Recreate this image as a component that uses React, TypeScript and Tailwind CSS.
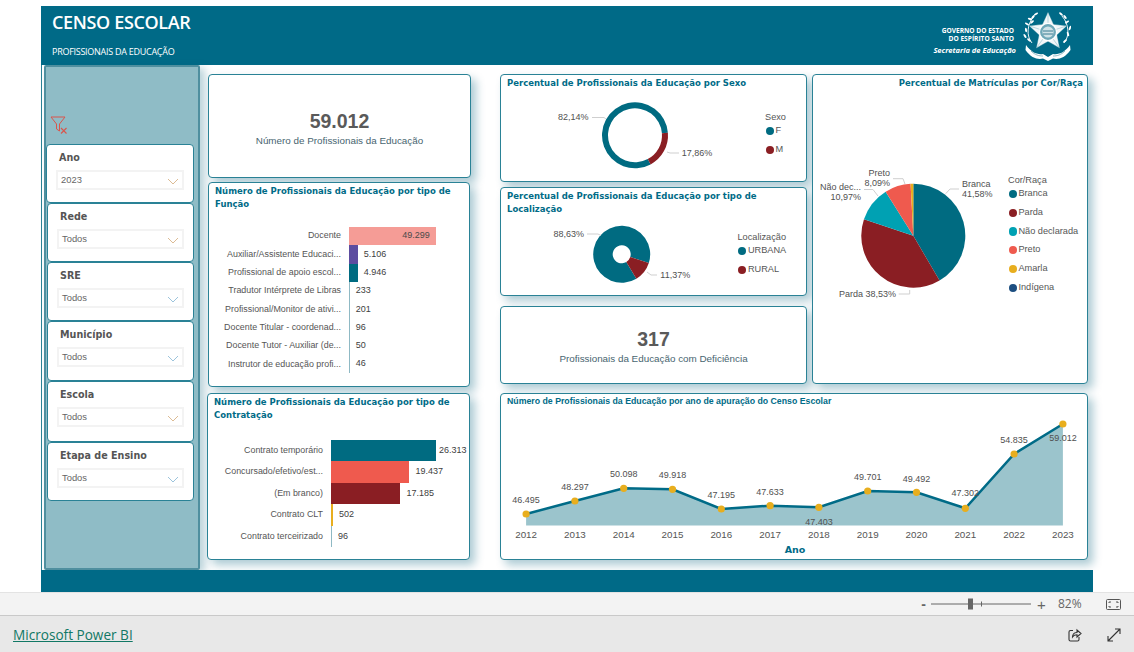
import React from "react";

const TEAL = "#006b87";
const RED = "#8a1e23";

function Card({ className = "", children }: { className?: string; children?: React.ReactNode }) {
  return (
    <div className={"bg-white border border-[#2a8296] rounded-[4px] shadow-[5px_5px_10px_rgba(0,95,120,0.33)] overflow-hidden shrink-0 " + className}>
      {children}
    </div>
  );
}

function Title({ children, className = "" }: { children: React.ReactNode; className?: string }) {
  return (
    <div className={"font-['DejaVu_Sans'] font-bold text-[8.5px] leading-[13px] text-[#006b87] pt-[2px] whitespace-nowrap " + className}>{children}</div>
  );
}

function Kpi({ value, label, className = "" }: { value: string; label: string; className?: string }) {
  return (
    <div className={"h-full flex flex-col items-center justify-center " + className}>
      <div className="font-['Liberation_Sans'] font-bold text-[19.5px] leading-[22px] text-[#5a5a5a]">{value}</div>
      <div className="font-['Liberation_Sans'] text-[9.85px] leading-[14px] mt-[2px] text-[#47646f]">{label}</div>
    </div>
  );
}

function Slicer({ title, value, chev, className = "" }: { title: string; value: string; chev: string; className?: string }) {
  return (
    <div className={"bg-white border border-[#2a8296] rounded-[4px] shrink-0 px-[9px] " + className}>
      <div className="h-[25px] pt-[6px] pl-[3px] font-['DejaVu_Sans'] font-bold text-[9.6px] leading-[13px] text-[#555555]">{title}</div>
      <div className="h-[20px] border-2 border-[#f3f3f3] flex items-center justify-between pl-[3px] pr-[3px] font-['Liberation_Sans'] text-[9.4px] text-[#666666]">
        <span>{value}</span>
        <svg width="12" height="7" viewBox="0 0 12 7" className="mt-[2px]">
          <path d="M1 1 L6 6 L11 1" fill="none" stroke={chev} strokeWidth="1" />
        </svg>
      </div>
    </div>
  );
}

function Legend({ title, items, className = "" }: { title: string; items: [string, string][]; className?: string }) {
  return (
    <div className={"font-['Liberation_Sans'] text-[9.2px] text-[#555555] " + className}>
      <div className="h-[9px] leading-[9px]">{title}</div>
      {items.map(([t, c]) => (
        <div key={t} className="h-[18.8px] flex items-center">
          <span className="w-[8.4px] h-[8.4px] rounded-full mr-[1.5px] ml-[0.5px]" style={{ backgroundColor: c }} />
          <span>{t}</span>
        </div>
      ))}
    </div>
  );
}

function pt(cx: number, cy: number, r: number, deg: number): [number, number] {
  const a = ((deg - 90) * Math.PI) / 180;
  return [cx + r * Math.cos(a), cy + r * Math.sin(a)];
}

function arc(cx: number, cy: number, r: number, r0: number, a: number, b: number) {
  const [x1, y1] = pt(cx, cy, r, a);
  const [x2, y2] = pt(cx, cy, r, b);
  const large = b - a > 180 ? 1 : 0;
  if (r0 === 0) return `M${cx} ${cy} L${x1} ${y1} A${r} ${r} 0 ${large} 1 ${x2} ${y2} Z`;
  const [x3, y3] = pt(cx, cy, r0, b);
  const [x4, y4] = pt(cx, cy, r0, a);
  return `M${x1} ${y1} A${r} ${r} 0 ${large} 1 ${x2} ${y2} L${x3} ${y3} A${r0} ${r0} 0 ${large} 0 ${x4} ${y4} Z`;
}

function Txt({ x, y, children, anchor = "start", className = "fill-[#505050] text-[9px]" }: { x: number; y: number; children: React.ReactNode; anchor?: "start" | "middle" | "end"; className?: string }) {
  return (
    <text x={x} y={y} textAnchor={anchor} dominantBaseline="central" className={"font-['Liberation_Sans'] " + className}>
      {children}
    </text>
  );
}

function Leader({ d }: { d: string }) {
  return <path d={d} fill="none" stroke="#cfcfcf" strokeWidth="1" />;
}

type Row = { label: string; w: number; color: string; value: string; inside?: boolean; ml?: number };

function Bars({ rows, labelW, gap, h, className = "" }: { rows: Row[]; labelW: number; gap: number; h: number; className?: string }) {
  return (
    <div className={"font-['Liberation_Sans'] text-[8.9px] text-[#555555] " + className}>
      {rows.map((r) => (
        <div key={r.label} className="flex items-center" style={{ height: h }}>
          <div className="text-right whitespace-nowrap shrink-0" style={{ width: labelW, marginRight: gap }}>{r.label}</div>
          <div className="h-full shrink-0 flex items-center justify-end" style={{ width: r.w, backgroundColor: r.color }}>
            {r.inside && <span className="pr-[6px] text-[9px] text-[#4a4a4a]">{r.value}</span>}
          </div>
          {!r.inside && <span className="text-[9px] text-[#404040]" style={{ marginLeft: r.ml ?? 6 }}>{r.value}</span>}
        </div>
      ))}
    </div>
  );
}

const funcao: Row[] = [
  { label: "Docente", w: 87, color: "#f59c96", value: "49.299", inside: true },
  { label: "Auxiliar/Assistente Educaci...", w: 9, color: "#5d4da0", value: "5.106" },
  { label: "Profissional de apoio escol...", w: 9, color: "#006b81", value: "4.946" },
  { label: "Tradutor Intérprete de Libras", w: 1, color: "#8fb9c4", value: "233" },
  { label: "Profissional/Monitor de ativi...", w: 1, color: "#8fb9c4", value: "201" },
  { label: "Docente Titular - coordenad...", w: 1, color: "#8fb9c4", value: "96" },
  { label: "Docente Tutor - Auxiliar (de...", w: 1, color: "#8fb9c4", value: "50" },
  { label: "Instrutor de educação profi...", w: 1, color: "#8fb9c4", value: "46" },
];

const contrat: Row[] = [
  { label: "Contrato temporário", w: 105.5, color: "#006b81", value: "26.313", ml: 3 },
  { label: "Concursado/efetivo/est...", w: 78, color: "#ef5a4e", value: "19.437", ml: 7 },
  { label: "(Em branco)", w: 69, color: "#8a1e23", value: "17.185", ml: 7 },
  { label: "Contrato CLT", w: 2, color: "#e8ae1e", value: "502", ml: 6.5 },
  { label: "Contrato terceirizado", w: 1, color: "#8fb9c4", value: "96", ml: 6.5 },
];

const years = [2012, 2013, 2014, 2015, 2016, 2017, 2018, 2019, 2020, 2021, 2022, 2023];
const ys = [514, 501, 488.3, 489.3, 509, 505.7, 507.3, 491, 492.3, 508.3, 454, 424];
const vals = ["46.495", "48.297", "50.098", "49.918", "47.195", "47.633", "47.403", "49.701", "49.492", "47.302", "54.835", "59.012"];
const labelYs = [499.7, 486.7, 473.7, 474.7, 494.7, 491.7, 521.7, 476.7, 478.7, 493.3, 439.7, 437.7];
const xs = years.map((_, i) => 526.1 + i * 48.8);

function LineChart() {
  const line = xs.map((x, i) => `${x},${ys[i]}`).join(" ");
  return (
    <svg width="586" height="150" viewBox="501 409 586 150" className="block">
      <polygon points={`526.1,525.5 ${line} ${xs[11]},525.5`} fill="#9bc4cc" />
      <polyline points={line} fill="none" stroke={TEAL} strokeWidth="2.5" />
      {xs.map((x, i) => (
        <circle key={x} cx={x} cy={ys[i]} r="3.6" fill="#e8ae1e" />
      ))}
      {xs.map((x, i) => (
        <Txt key={x} x={x} y={labelYs[i]} anchor="middle">{vals[i]}</Txt>
      ))}
      {xs.map((x, i) => (
        <Txt key={x} x={x} y={534.7} anchor="middle" className="fill-[#555555] text-[9.8px]">{years[i]}</Txt>
      ))}
      <text x={795} y={549} textAnchor="middle" dominantBaseline="central" className="font-['DejaVu_Sans'] font-bold text-[9.5px] fill-[#006b87]">Ano</text>
    </svg>
  );
}

function Leaf({ x, y, a }: { x: number; y: number; a: number }) {
  return <ellipse cx={x} cy={y} rx="2.3" ry="1" fill="#ffffff" transform={`rotate(${a} ${x} ${y})`} />;
}

function Crest() {
  const star = Array.from({ length: 10 }, (_, i) => {
    const [x, y] = pt(25, 22, i % 2 === 0 ? 20 : 9.5, i * 36);
    return `${x},${y}`;
  }).join(" ");
  return (
    <svg width="48" height="52" viewBox="0 0 48 52" className="shrink-0">
      <path d="M9 33 C3 26 4 14 11 6" fill="none" stroke="#ffffff" strokeWidth="0.9" />
      <path d="M41 33 C47 26 46 14 39 6" fill="none" stroke="#ffffff" strokeWidth="0.9" />
      <Leaf x={10} y={7} a={-50} />
      <Leaf x={13} y={4} a={-30} />
      <Leaf x={7} y={9} a={20} />
      <Leaf x={9} y={12} a={-40} />
      <Leaf x={4} y={14} a={30} />
      <Leaf x={3} y={20} a={80} />
      <Leaf x={2} y={26} a={60} />
      <Leaf x={6} y={30} a={40} />
      <Leaf x={38} y={4} a={40} />
      <Leaf x={42} y={7} a={50} />
      <Leaf x={44} y={12} a={-30} />
      <Leaf x={47} y={18} a={-70} />
      <Leaf x={45} y={24} a={70} />
      <Leaf x={42} y={31} a={-40} />
      <polygon points={star} fill="#ffffff" fillOpacity="0.95" stroke="#0a6f87" strokeWidth="0.4" />
      {Array.from({ length: 5 }, (_, i) => {
        const [x, y] = pt(25, 22, 19, i * 72);
        return <path key={i} d={`M25 22 L${x} ${y}`} stroke="#9fc6d0" strokeWidth="0.7" />;
      })}
      <circle cx="25" cy="22" r="8.6" fill="#6fa8b8" stroke="#ffffff" strokeWidth="1.3" />
      <circle cx="25" cy="22" r="5.6" fill="#cfe2e7" />
      <path d="M20 21h10M20 24h10" stroke="#3b7d92" strokeWidth="1" />
      <path d="M3 35 C8 42 14 45 20 44 L25 47 L30 44 C36 45 42 42 47 35 L47.5 40 C42 48 35 50 30 48.5 L25 51 L20 48.5 C15 50 8 48 2.5 40 Z" fill="#ffffff" />
      <path d="M8 41 C12 45 16 46 20 46 M42 41 C38 45 34 46 30 46" fill="none" stroke="#4b8da0" strokeWidth="0.6" />
    </svg>
  );
}

export default function App() {
  const teal = "#006b81";
  return (
    <div className="w-[1134px] h-[652px] bg-white overflow-hidden flex flex-col">
      <div className="pt-[6px] pl-[41px] h-[586px] shrink-0 box-content">
        <div className="w-[1052px] h-[586px] flex flex-col">
          {/* header */}
          <header className="h-[59px] shrink-0 bg-[#006a87] flex justify-between text-white">
            <div className="pl-[11px] font-['Open_Sans']">
              <div className="text-[18px] leading-[24px] font-semibold tracking-[-0.35px] mt-[4px]">CENSO ESCOLAR</div>
              <div className="text-[9px] leading-[12px] mt-[12px] tracking-[-0.27px]">PROFISSIONAIS DA EDUCAÇÃO</div>
            </div>
            <div className="flex items-start pr-[22px] pt-[4px]">
              <div className="text-right font-['Open_Sans'] font-bold text-[6.6px] leading-[8px] mt-[17px] mr-[6px]">
                <div className="pr-[3px]">GOVERNO DO ESTADO</div>
                <div className="pr-[3px]">DO ESPÍRITO SANTO</div>
                <div className="italic mt-[3px] text-[7.5px] pr-[1px]">Secretaria de Educação</div>
              </div>
              <Crest />
            </div>
          </header>

          {/* body */}
          <div className="h-[505px] shrink-0 flex bg-white">
            <aside className="w-[159px] shrink-0 pl-[2px] border-l border-[#2a8296]">
              <div className="h-full bg-[#8fbcc6] border-2 border-[#4f8f9f] rounded-[2px] flex flex-col shadow-[5px_3px_9px_rgba(0,95,120,0.28)]">
                <svg width="18" height="18" viewBox="0 0 18 18" className="ml-[4px] mt-[49px] mb-[10px] shrink-0">
                  <path d="M1 1 H15 L9.5 8 V15 L6.5 13 V8 Z" fill="none" stroke="#d9554c" strokeWidth="1" />
                  <path d="M11 12 L16.5 17.5 M16.5 12 L11 17.5" stroke="#d9554c" strokeWidth="1.1" />
                </svg>
                <Slicer title="Ano" value="2023" chev="#dcbb94" className="h-[59px] w-[148px]" />
                <Slicer title="Rede" value="Todos" chev="#dcbb94" className="h-[59px] w-[147px] ml-[1px]" />
                <Slicer title="SRE" value="Todos" chev="#9cc4dc" className="h-[59px] w-[147px] ml-[1px]" />
                <Slicer title="Município" value="Todos" chev="#9cc4dc" className="h-[60px] w-[147px] ml-[1px]" />
                <Slicer title="Escola" value="Todos" chev="#dcbb94" className="h-[61px] w-[147px] ml-[1px]" />
                <Slicer title="Etapa de Ensino" value="Todos" chev="#9cc4dc" className="h-[59px] w-[147px] ml-[1px]" />
              </div>
            </aside>

            {/* col 1 */}
            <div className="w-[263px] ml-[8px] pt-[9px] shrink-0 flex flex-col">
              <Card className="h-[104px] w-[263px]">
                <Kpi value="59.012" label="Número de Profissionais da Educação" className="pt-[6px]" />
              </Card>
              <Card className="h-[205px] w-[262px] mt-[4px]">
                <Title className="px-[6px]">Número de Profissionais da Educação por tipo de<br />Função</Title>
                <Bars rows={funcao} labelW={132} gap={7.7} h={18.3} className="mt-[16px]" />
              </Card>
              <Card className="h-[167px] w-[263px] mt-[6px] -ml-[1px]">
                <Title className="px-[6px]">Número de Profissionais da Educação por tipo de<br />Contratação</Title>
                <Bars rows={contrat} labelW={115} gap={7.5} h={21.5} className="mt-[17.5px]" />
              </Card>
            </div>

            {/* right */}
            <div className="w-[588px] ml-[29px] pt-[9px] shrink-0 flex flex-col">
              <div className="h-[310px] flex gap-[5px] shrink-0">
                <div className="w-[307px] shrink-0 flex flex-col">
                  <Card className="h-[108px]">
                    <Title className="px-[6px]">Percentual de Profissionais da Educação por Sexo</Title>
                    <div className="flex">
                      <svg width="264" height="90" viewBox="501 90 264 90" className="block shrink-0">
                        <path d={arc(635, 135.3, 33, 27, 151.8, 445.4)} fill={teal} />
                        <path d={arc(635, 135.3, 33, 27, 85.4, 151.8)} fill={RED} />
                        <Leader d="M592 117.5 H604 L606 119" />
                        <Leader d="M667 152 L670 153 H679" />
                        <Txt x={588.6} y={117.3} anchor="end">82,14%</Txt>
                        <Txt x={681.7} y={152.7}>17,86%</Txt>
                      </svg>
                      <Legend title="Sexo" items={[["F", teal], ["M", RED]]} className="mt-[22.5px]" />
                    </div>
                  </Card>
                  <Card className="h-[109px] mt-[5px]">
                    <Title className="px-[6px]">Percentual de Profissionais da Educação por tipo de<br />Localização</Title>
                    <div className="flex">
                      <svg width="236.5" height="79" viewBox="501 216 236.5 79" className="block shrink-0">
                        <path d={arc(621.7, 254.3, 28.5, 9, 149, 468)} fill={teal} />
                        <path d={arc(621.7, 254.3, 28.5, 9, 108, 149)} fill={RED} />
                        <Leader d="M587 234 H598 L601 235.5" />
                        <Leader d="M647 272 L651 275 H657" />
                        <Txt x={584} y={234} anchor="end">88,63%</Txt>
                        <Txt x={660.3} y={274.7}>11,37%</Txt>
                      </svg>
                      <Legend title="Localização" items={[["URBANA", teal], ["RURAL", RED]]} className="mt-[16.7px]" />
                    </div>
                  </Card>
                  <Card className="h-[78px] mt-[10px]">
                    <Kpi value="317" label="Profissionais da Educação com Deficiência" className="pt-[4px]" />
                  </Card>
                </div>
                <Card className="w-[276px] h-[310px]">
                  <Title className="text-right pr-[4px]">Percentual de Matrículas por Cor/Raça</Title>
                  <div className="flex">
                    <svg width="195" height="219" viewBox="813 90 195 219" className="block shrink-0">
                      <path d={arc(913.3, 235.7, 52, 0, 0, 149.7)} fill={teal} />
                      <path d={arc(913.3, 235.7, 52, 0, 149.7, 288.4)} fill={RED} />
                      <path d={arc(913.3, 235.7, 52, 0, 288.4, 327.9)} fill="#00a1b3" />
                      <path d={arc(913.3, 235.7, 52, 0, 327.9, 357)} fill="#ef5a4e" />
                      <path d={arc(913.3, 235.7, 52, 0, 357, 360)} fill="#e8ae1e" />
                      <Leader d="M945.7 193.7 L950 189 H959" />
                      <Leader d="M898.7 294 H909.7 V290" />
                      <Leader d="M864 189.5 H873 L878 196" />
                      <Leader d="M893 178.7 H903 L905 184" />
                      <Txt x={962} y={184}>Branca</Txt>
                      <Txt x={962} y={193.7}>41,58%</Txt>
                      <Txt x={896} y={293.7} anchor="end">Parda 38,53%</Txt>
                      <Txt x={861} y={186.5} anchor="end">Não dec...</Txt>
                      <Txt x={861} y={196.7} anchor="end">10,97%</Txt>
                      <Txt x={890} y={172.5} anchor="end">Preto</Txt>
                      <Txt x={890} y={182.6} anchor="end">8,09%</Txt>
                    </svg>
                    <Legend
                      title="Cor/Raça"
                      className="mt-[85.5px]"
                      items={[["Branca", teal], ["Parda", RED], ["Não declarada", "#00a1b3"], ["Preto", "#ef5a4e"], ["Amarla", "#e8ae1e"], ["Indígena", "#1c4e80"]]}
                    />
                  </div>
                </Card>
              </div>
              <Card className="h-[167px] w-[588px] mt-[9px]">
                <div className="font-['Liberation_Sans'] font-bold text-[8.75px] leading-[13px] text-[#006b87] pt-[1px] px-[6px] h-[15px]">
                  Número de Profissionais da Educação por ano de apuração do Censo Escolar
                </div>
                <LineChart />
              </Card>
            </div>
          </div>

          {/* footer band */}
          <div className="h-[22px] shrink-0 bg-[#006a87]" />
        </div>
      </div>

      {/* zoom bar */}
      <div className="h-[24px] shrink-0 bg-[#f3f3f3] border-t border-[#e3e3e3] border-b border-b-[#c9c9c9] flex items-center justify-end font-['Liberation_Sans'] text-[#666666]">
        <span className="text-[14px] font-bold mr-[5px] leading-none">-</span>
        <svg width="101" height="12" viewBox="0 0 101 12" className="shrink-0">
          <path d="M0 6 H100" stroke="#666666" strokeWidth="1" />
          <rect x="37" y="0.5" width="5" height="11" fill="#666666" />
          <path d="M50.5 3.5 V8.5" stroke="#666666" strokeWidth="1" />
        </svg>
        <span className="text-[15px] ml-[5px] leading-none w-[12px]">+</span>
        <span className="text-[12px] ml-[9px] w-[26px] font-['Open_Sans']">82%</span>
        <svg width="15" height="11" viewBox="0 0 15 11" className="ml-[22px] mr-[13px] shrink-0">
          <rect x="0.5" y="0.5" width="14" height="10" rx="1" fill="none" stroke="#555555" />
          <path d="M3 4 V3 H5 M10 3 H12 V4 M12 7 V8 H10 M5 8 H3 V7" fill="none" stroke="#555555" />
        </svg>
      </div>

      {/* bottom bar */}
      <div className="flex-1 bg-[#e8e8e8] flex items-center justify-between pl-[13px] pt-[1px]">
        <a className="font-['Open_Sans'] text-[13.6px] underline text-[#117865] mt-[2px]">Microsoft Power BI</a>
        <div className="flex items-center">
          <svg width="14" height="14" viewBox="0 0 14 14" className="shrink-0">
            <path d="M5 2.5 H2.5 Q1 2.5 1 4 V11.5 Q1 13 2.5 13 H9.5 Q11 13 11 11.5 V9" fill="none" stroke="#333333" strokeWidth="1.1" />
            <path d="M4.5 9 C4.5 6 6.5 4.5 9 4.5 V2 L13 5.5 L9 9 V6.8 C7 6.8 5.5 7.5 4.5 9 Z" fill="none" stroke="#333333" strokeWidth="1.1" />
          </svg>
          <svg width="14" height="14" viewBox="0 0 14 14" className="ml-[25px] mr-[13px] shrink-0">
            <path d="M1 13 L13 1 M8 1 H13 V6 M1 8 V13 H6" fill="none" stroke="#333333" strokeWidth="1.1" />
          </svg>
        </div>
      </div>
    </div>
  );
}
